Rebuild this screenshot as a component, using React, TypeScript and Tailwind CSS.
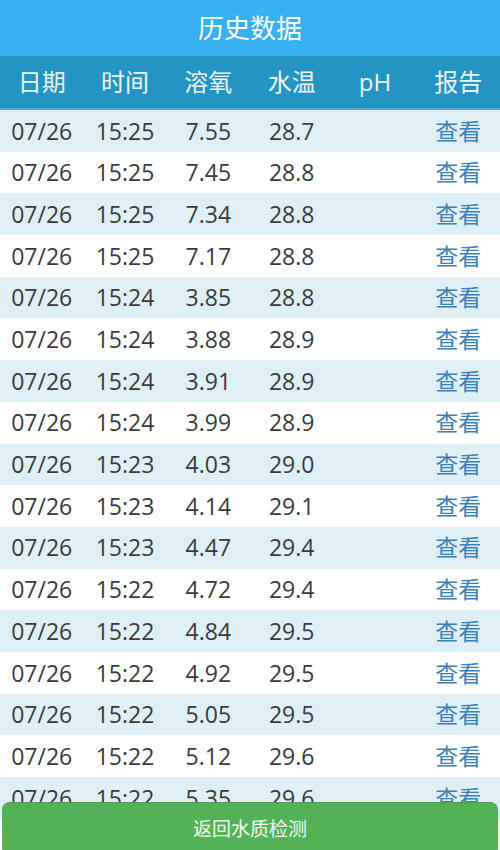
import React from 'react';

interface Record {
  date: string;
  time: string;
  oxygen: string;
  temp: string;
  ph: string;
}

const records: Record[] = [
  { date: '07/26', time: '15:25', oxygen: '7.55', temp: '28.7', ph: '' },
  { date: '07/26', time: '15:25', oxygen: '7.45', temp: '28.8', ph: '' },
  { date: '07/26', time: '15:25', oxygen: '7.34', temp: '28.8', ph: '' },
  { date: '07/26', time: '15:25', oxygen: '7.17', temp: '28.8', ph: '' },
  { date: '07/26', time: '15:24', oxygen: '3.85', temp: '28.8', ph: '' },
  { date: '07/26', time: '15:24', oxygen: '3.88', temp: '28.9', ph: '' },
  { date: '07/26', time: '15:24', oxygen: '3.91', temp: '28.9', ph: '' },
  { date: '07/26', time: '15:24', oxygen: '3.99', temp: '28.9', ph: '' },
  { date: '07/26', time: '15:23', oxygen: '4.03', temp: '29.0', ph: '' },
  { date: '07/26', time: '15:23', oxygen: '4.14', temp: '29.1', ph: '' },
  { date: '07/26', time: '15:23', oxygen: '4.47', temp: '29.4', ph: '' },
  { date: '07/26', time: '15:22', oxygen: '4.72', temp: '29.4', ph: '' },
  { date: '07/26', time: '15:22', oxygen: '4.84', temp: '29.5', ph: '' },
  { date: '07/26', time: '15:22', oxygen: '4.92', temp: '29.5', ph: '' },
  { date: '07/26', time: '15:22', oxygen: '5.05', temp: '29.5', ph: '' },
  { date: '07/26', time: '15:22', oxygen: '5.12', temp: '29.6', ph: '' },
  { date: '07/26', time: '15:22', oxygen: '5.35', temp: '29.6', ph: '' },
];

const columns = ['日期', '时间', '溶氧', '水温', 'pH', '报告'];

export default function App() {
  return (
    <div
      className="relative h-[850px] w-[500px] overflow-hidden bg-white"
      style={{ fontFamily: '"Open Sans", "Noto Sans CJK SC", sans-serif' }}
    >
      {/* title */}
      <div className="flex h-[56px] items-center justify-center bg-[#39b0ef] pt-[1px] text-[26px] text-white">
        历史数据
      </div>

      {/* header */}
      <div className="grid h-[54px] grid-cols-6 items-center border-b-2 border-[#48add6] bg-[#2495c3] text-center text-[24px] text-[#eaf6fa]">
        {columns.map((c) => (
          <div key={c}>{c}</div>
        ))}
      </div>

      {/* rows */}
      <div>
        {records.map((r, i) => (
          <div
            key={i}
            className={`grid h-[41.7px] grid-cols-6 items-center text-center text-[23px] text-[#3a3a3a] ${
              i % 2 === 0 ? 'bg-[#def0f5]' : 'bg-white'
            }`}
          >
            <div>{r.date}</div>
            <div>{r.time}</div>
            <div>{r.oxygen}</div>
            <div>{r.temp}</div>
            <div>{r.ph}</div>
            <div className="text-[#3b80b8]">查看</div>
          </div>
        ))}
      </div>

      {/* back button */}
      <button className="absolute left-[2px] right-[2px] top-[802px] flex h-[54px] items-start justify-center rounded-lg border-t border-[#4aa04a] bg-[#55b155] pt-[12px] text-[19px] text-[#f0faf0]">
        返回水质检测
      </button>
    </div>
  );
}
